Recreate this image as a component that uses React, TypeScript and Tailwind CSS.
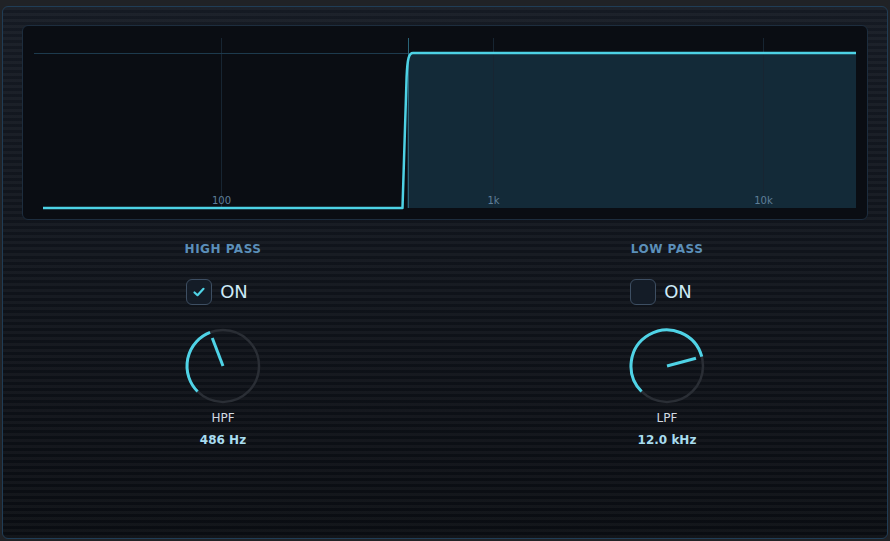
import React from "react";

const FONT = { fontFamily: '"DejaVu Sans", Verdana, sans-serif' };

function polar(cx: number, cy: number, r: number, deg: number) {
  const a = (deg * Math.PI) / 180;
  return [cx + r * Math.sin(a), cy - r * Math.cos(a)];
}

function Knob({ angle }: { angle: number }) {
  const cx = 40;
  const cy = 40;
  const r = 36;
  const [sx, sy] = polar(cx, cy, r, -135);
  const [ex, ey] = polar(cx, cy, r, angle);
  const large = angle - -135 > 180 ? 1 : 0;
  const [px, py] = polar(cx, cy, 30, angle);
  return (
    <svg width="80" height="80" viewBox="0 0 80 80">
      <circle cx={cx} cy={cy} r={r} fill="none" stroke="#2a2e35" strokeWidth="2.5" />
      <path
        d={`M${sx},${sy} A${r},${r} 0 ${large} 1 ${ex},${ey}`}
        fill="none"
        stroke="#4fd3e6"
        strokeWidth="3"
      />
      <line x1={cx} y1={cy} x2={px} y2={py} stroke="#4fd3e6" strokeWidth="3" />
    </svg>
  );
}

function Checkbox({ checked }: { checked: boolean }) {
  return (
    <div className="w-[26px] h-[26px] rounded-[6px] border-[1.5px] border-[#3d4e62] bg-[#141c27] flex items-center justify-center">
      {checked && (
        <svg width="14" height="14" viewBox="0 0 14 14">
          <path d="M2.5,7.5 L5.5,10.2 L11.5,3.8" fill="none" stroke="#4fd3e6" strokeWidth="2.2" strokeLinecap="round" strokeLinejoin="round" />
        </svg>
      )}
    </div>
  );
}

function Column({ title, checked, angle, label, value }: { title: string; checked: boolean; angle: number; label: string; value: string }) {
  return (
    <div className="w-[160px] flex flex-col items-center">
      <div className="mt-[22px] h-[14px] leading-[14px] text-[12px] font-bold tracking-[0.5px] text-[#5b8fb9]" style={FONT}>
        {title}
      </div>
      <div className="mt-[23px] h-[26px] flex items-center gap-[8px] pr-[12px]">
        <Checkbox checked={checked} />
        <span className="text-[18px] leading-[26px] text-[#cdeaf6]" style={FONT}>ON</span>
      </div>
      <div className="mt-[21px] h-[80px]">
        <Knob angle={angle} />
      </div>
      <div className="mt-[5px] h-[14px] leading-[14px] text-[12px] text-[#d3dae2]" style={FONT}>
        {label}
      </div>
      <div className="mt-[8px] h-[14px] leading-[14px] text-[12px] font-bold text-[#a8dcef]" style={FONT}>
        {value}
      </div>
    </div>
  );
}

function Graph() {
  const grid = [199, 471, 741];
  return (
    <div className="h-[195px] rounded-[6px] border border-[#1d2d3e] bg-[#0a0d13] overflow-hidden">
      <svg width="844" height="193" viewBox="1 1 844 193" className="block">
        <path d="M385,183 L385,40 C386,31 388,28 391,28 L834,28 L834,183 Z" fill="#132a38" />
        {grid.map((x) => (
          <line key={x} x1={x + 0.5} y1={13} x2={x + 0.5} y2={183} stroke="#172532" strokeWidth="1" />
        ))}
        <line x1={12} y1={28.5} x2={834} y2={28.5} stroke="#1d3a4d" strokeWidth="1" />
        <line x1={386.5} y1={13} x2={386.5} y2={183} stroke="#2a6478" strokeWidth="1" />
        <g style={FONT} fontSize="10" fill="#5f7f99" textAnchor="middle">
          <text x={199.5} y={179}>100</text>
          <text x={471.5} y={179}>1k</text>
          <text x={741.5} y={179}>10k</text>
        </g>
        <path
          d="M21,183 L380.5,183 L384.6,52 C385.4,33 387,28 391,28 L834,28"
          fill="none"
          stroke="#4dd2e5"
          strokeWidth="2.5"
          strokeLinejoin="round"
        />
      </svg>
    </div>
  );
}

export default function App() {
  return (
    <div className="w-[890px] h-[541px] bg-[#202226] pt-[6px] px-[2px] pb-[2px] overflow-hidden">
      <div className="h-full rounded-[6px] border border-[#203d56] px-[19px] pt-[18px] [background-image:repeating-linear-gradient(180deg,rgba(255,255,255,0.035)_0px,rgba(255,255,255,0.035)_3px,transparent_3px,transparent_6px),linear-gradient(180deg,#151a23,#0a0d12)]">
        <Graph />
        <div className="flex justify-between px-[121px]">
          <Column title="HIGH PASS" checked={true} angle={-21} label="HPF" value="486 Hz" />
          <Column title="LOW PASS" checked={false} angle={75} label="LPF" value="12.0 kHz" />
        </div>
      </div>
    </div>
  );
}
